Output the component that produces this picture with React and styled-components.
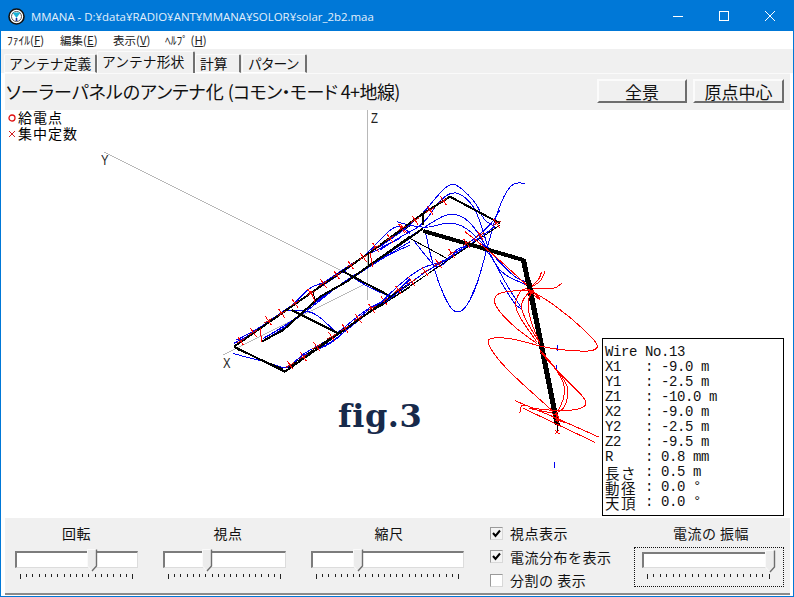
import React from "react";
import styled, { createGlobalStyle } from "styled-components";

const GlobalStyle = createGlobalStyle`
  html, body { margin: 0; padding: 0; background: #fff; }
  body { font-family: "Noto Sans CJK JP", "Liberation Sans", sans-serif; color: #000; }
`;

const Win = styled.div`
  width: 794px;
  height: 597px;
  box-sizing: border-box;
  border: 1px solid #0078d7;
  display: flex;
  flex-direction: column;
  overflow: hidden;
  background: #fff;
`;

const TitleBar = styled.div`
  height: 30px;
  flex: none;
  background: #0078d7;
  display: flex;
  align-items: center;
  padding-left: 7px;
  color: #e4f0fb;
  font-family: "Open Sans", sans-serif;
  font-size: 11.45px;
`;

const TitleText = styled.span`
  margin-left: 6px;
  flex: 1;
  white-space: nowrap;
`;

const WinBtn = styled.div`
  width: 46px;
  height: 30px;
  display: flex;
  align-items: center;
  justify-content: center;
`;

const MenuBar = styled.div`
  height: 18px;
  flex: none;
  display: flex;
  align-items: center;
  padding-left: 6px;
  font-size: 11.5px;
  color: #222;
  background: #fff;
`;

const MenuItem = styled.span`
  width: ${(p) => p.$w}px;
  white-space: pre;
  u { text-underline-offset: 1px; }
`;

const TabRow = styled.div`
  height: 24px;
  flex: none;
  background: #f0f0f0;
  display: flex;
  align-items: flex-end;
  padding-left: 3px;
`;

const Tab = styled.div`
  height: ${(p) => (p.$active ? 22 : 19)}px;
  width: ${(p) => p.$w}px;
  margin-right: ${(p) => p.$gap || 0}px;
  box-sizing: border-box;
  border: 1px solid #fbfbfb;
  border-right: 2px solid #707070;
  border-top-left-radius: 2px;
  border-top-right-radius: 2px;
  font-size: 13.8px;
  letter-spacing: ${(p) => p.$track || 0}px;
  line-height: ${(p) => (p.$active ? 19 : 17)}px;
  padding-left: ${(p) => p.$pad || 4}px;
  white-space: nowrap;
  overflow: hidden;
  background: #f0f0f0;
  border-bottom: ${(p) => (p.$active ? "none" : "1px solid #fff")};
  color: #111;
`;

const Panel = styled.div`
  flex: 1;
  margin: 0 3px 1px 4px;
  display: flex;
  flex-direction: column;
  background: #f0f0f0;
  border-top: 1px solid #fafafa;
  border-bottom: 2px solid #8a8a8a;
  min-height: 0;
`;

const Header = styled.div`
  height: 36px;
  flex: none;
  box-sizing: border-box;
  display: flex;
  align-items: center;
  padding: 0 6px 2px 1px;
  gap: 6px;
`;

const Heading = styled.div`
  flex: 1;
  font-size: 18px;
  white-space: pre;
  color: #111;
  font-feature-settings: "palt";
`;

const HeadingTail = styled.span`
  letter-spacing: -0.6px;
`;

const HeadButton = styled.div`
  width: ${(p) => p.$w}px;
  height: 24px;
  box-sizing: border-box;
  border-top: 2px solid #fbfbfb;
  border-left: 2px solid #fbfbfb;
  border-right: 2px solid #6d6d6d;
  border-bottom: 2px solid #6d6d6d;
  display: flex;
  align-items: center;
  justify-content: center;
  font-size: 17px;
  line-height: 1;
  color: #111;
`;

const Canvas = styled.div`
  position: relative;
  height: 408px;
  flex: none;
  background: #fff;
  overflow: hidden;
`;

const Plot = styled.svg`
  position: absolute;
  left: 0;
  top: 0;
  width: 785px;
  height: 408px;
  shape-rendering: crispEdges;
`;

const LegendRow = styled.div`
  position: absolute;
  left: 3px;
  top: ${(p) => p.$y}px;
  display: flex;
  align-items: center;
  gap: 2px;
  font-size: 14px;
  line-height: 15px;
  letter-spacing: 1px;
`;

const AxisLabel = styled.span`
  position: absolute;
  left: ${(p) => p.$x}px;
  top: ${(p) => p.$y}px;
  font-family: "Liberation Sans", sans-serif;
  font-size: 14.5px;
  line-height: 14px;
  color: #222;
  transform: scaleX(0.78);
  transform-origin: left top;
`;

const FigLabel = styled.div`
  position: absolute;
  left: 333px;
  top: 284px;
  font-family: "DejaVu Serif", "Liberation Serif", serif;
  font-weight: 700;
  font-size: 32px;
  line-height: 44px;
  color: #172a4b;
  letter-spacing: 0.5px;
`;

const InfoBox = styled.div`
  position: absolute;
  left: 597px;
  top: 228px;
  width: 182px;
  height: 178px;
  box-sizing: border-box;
  border: 1px solid #000;
  background: #fff;
  padding: 6px 0 0 2px;
`;

const InfoRow = styled.div`
  font-family: "Liberation Mono", monospace;
  font-size: 14px;
  letter-spacing: -0.4px;
  line-height: 15px;
  height: 15px;
  white-space: pre;
  color: #111;
`;

const Kanji = styled.span`
  display: inline-block;
  height: 15px;
  vertical-align: top;
  font-family: "Noto Sans CJK JP", sans-serif;
  font-size: 14.5px;
  line-height: 15px;
  letter-spacing: 1.5px;
`;

const Controls = styled.div`
  flex: 1;
  display: flex;
  padding-left: 10px;
  min-height: 0;
`;

const SliderGroup = styled.div`
  width: ${(p) => p.$w}px;
  margin-right: ${(p) => p.$gap || 0}px;
  padding-top: 5px;
`;

const SliderLabel = styled.div`
  text-align: center;
  font-size: 14px;
  line-height: 20px;
  height: 20px;
  padding-left: ${(p) => p.$shift || 0}px;
  white-space: pre;
  letter-spacing: 0.5px;
  color: #111;
`;

const Track = styled.div`
  position: relative;
  height: ${(p) => p.$h || 17}px;
  margin-top: ${(p) => p.$top ?? 8}px;
  box-sizing: border-box;
  background: #fff;
  border-top: 2px solid #7c7c7c;
  border-left: 2px solid #7c7c7c;
  border-right: 1px solid #dcdcdc;
  border-bottom: 1px solid #dcdcdc;
`;

const Thumb = styled.svg`
  position: absolute;
  left: ${(p) => p.$x}px;
  top: -4px;
`;

const Ticks = styled.div`
  display: flex;
  justify-content: space-between;
  align-items: flex-start;
  height: 5px;
  margin: 6px 5px 0;
`;

const Tick = styled.i`
  display: block;
  width: 1px;
  height: ${(p) => (p.$end ? 5 : 3)}px;
  background: #222;
`;

const CheckColumn = styled.div`
  width: 144px;
  padding-top: 5px;
  display: flex;
  flex-direction: column;
  gap: 3.5px;
`;

const CheckRow = styled.div`
  display: flex;
  align-items: center;
  height: 20px;
  font-size: 14px;
  letter-spacing: 0.5px;
  color: #111;
  white-space: pre;
`;

const CheckBox = styled.span`
  width: 13px;
  height: 13px;
  box-sizing: border-box;
  border: 1px solid #9a9a9a;
  border-right-color: #d8d8d8;
  border-bottom-color: #d8d8d8;
  background: ${(p) => (p.$on ? "#f4f4f4" : "#fff")};
  margin-right: 7px;
  display: flex;
  align-items: center;
  justify-content: center;
`;

const FocusBox = styled.div`
  width: 150px;
  height: 40px;
  margin-top: 4px;
  box-sizing: border-box;
  border: 1px dotted #111;
  padding: 4px 8px 0 7px;
`;

const FocusGroup = styled.div`
  padding-top: 5px;
`;

function TickRow({ count }) {
  return (
    <Ticks>
      {Array.from({ length: count }).map((_, i) => (
        <Tick key={i} $end={i === 0 || i === count - 1} />
      ))}
    </Ticks>
  );
}

function ThumbIcon({ x }) {
  return (
    <Thumb $x={x} width="11" height="24" viewBox="0 0 11 24">
      <path d="M0.5 0.5H9.5V17L5 22L0.5 17Z" fill="#ececec" stroke="#fafafa" />
      <path d="M9.5 0.5V17L5 22" fill="none" stroke="#6e6e6e" strokeWidth="1.4" />
    </Thumb>
  );
}

function Slider({ label, w, gap, x, ticks = 19, shift }) {
  return (
    <SliderGroup $w={w} $gap={gap}>
      <SliderLabel $shift={shift}>{label}</SliderLabel>
      <Track>
        <ThumbIcon x={x} />
      </Track>
      <TickRow count={ticks} />
    </SliderGroup>
  );
}

function Check({ on, children }) {
  return (
    <CheckRow>
      <CheckBox $on={on}>
        {on && (
          <svg width="9" height="9" viewBox="0 0 9 9">
            <path d="M1 4L3.5 7L8 1.5" fill="none" stroke="#000" strokeWidth="2" />
          </svg>
        )}
      </CheckBox>
      {children}
    </CheckRow>
  );
}

const AppIcon = () => (
  <svg width="17" height="17" viewBox="0 0 17 17">
    <circle cx="8.5" cy="8.5" r="7.5" fill="#fff" stroke="#111" strokeWidth="1.6" />
    <circle cx="8.5" cy="8.5" r="5" fill="none" stroke="#555" strokeWidth="1" />
    <path d="M4.5 4.5H12.5L8.5 10Z" fill="#19b4d8" />
    <path d="M8.5 10V13" stroke="#1030a0" strokeWidth="1.6" />
  </svg>
);

const FeedMark = () => (
  <svg width="8" height="8" viewBox="0 0 8 8">
    <circle cx="4" cy="4" r="3" fill="none" stroke="#e01010" strokeWidth="1.3" />
  </svg>
);

const LoadMark = () => (
  <svg width="8" height="8" viewBox="0 0 8 8">
    <path d="M1 1L7 7M7 1L1 7" stroke="#d02020" strokeWidth="1" />
  </svg>
);

// polylines are noted in crop coordinates (3x), each set with its own origin
const wireSets = [
  {
    origin: [220, 170],
    black: [
      ["42,530 195,605 570,340", 2],
      ["42,530 300,350 570,165", 2],
      ["50,538 190,597", 1],
      ["125,515 190,480 300,380 380,335 570,200", 2],
      ["215,420 350,488", 2],
      ["370,305 510,378", 2],
      ["445,290 445,250", 1],
      ["285,395 280,365", 1],
      ["205,592 350,490 570,352", 1],
    ],
    blue: [
      "38,550 90,565 140,575 190,595 210,590 250,550 300,525 345,495 400,450 450,410 510,385 570,325",
      "42,520 100,490 150,450 215,410 270,350 310,340 380,290 440,255 540,205",
      "50,510 120,475 200,415 290,360 340,325 430,265 530,155 570,190",
      "130,512 200,470 290,400 370,335 470,275 570,205",
      "130,505 210,460 300,385 380,335 480,270 570,215",
      "140,500 220,455 310,375 390,330 490,262 570,225",
      "200,420 260,420 300,440 350,490",
      "370,300 420,340 510,380",
      "210,590 240,555 320,530 370,490 440,420 500,390 570,330",
      "220,580 260,555 330,520 380,480 450,425 510,378 570,340",
    ],
    red: ["120,475 125,515", "272,362 285,395", "450,250 458,290"],
    crosses: [
      [62, 513], [100, 487], [145, 452], [185, 430], [225, 400], [272, 370], [310, 340], [350, 315],
      [392, 285], [430, 262], [467, 232], [510, 205], [550, 175], [210, 585], [250, 560], [290, 530],
      [335, 500], [375, 475], [415, 445], [455, 415], [492, 392], [535, 360],
    ],
  },
  {
    origin: [380, 170],
    black: [
      ["130,130 210,80 360,160", 2],
      ["0,225 130,130 130,165", 2],
      ["0,265 130,175", 2],
      ["360,165 190,280 0,410", 1],
      ["90,205 200,265", 1],
      ["130,183 430,270", 4],
      ["430,268 475,480", 5],
    ],
    blue: [
      "0,230 60,190 130,130 165,85 210,38 240,50 290,100 310,150 345,170",
      "0,240 60,200 130,165 175,95 215,65 250,75 290,120 325,235",
      "50,155 130,180 200,155 260,170 320,235 400,320 435,335",
      "90,200 135,170 210,125 270,150 325,240 360,310 440,345",
      "100,210 150,275 175,295 205,270 240,225 325,235 370,330 425,415",
      "0,400 60,340 130,290 175,280 210,262 330,170 360,120",
      "0,410 100,330 170,285 210,265 345,170",
      "435,42 410,33 380,60 350,130 320,240 290,350 260,410 235,430 210,415 175,340 150,250 135,180",
    ],
    red: [
      "255,185 320,235 440,345",
      "445,355 480,340 495,305",
      "445,355 475,335 485,305",
      "450,355 520,360 545,340",
      "450,355 480,385",
    ],
    crosses: [
      [30, 205], [65, 175], [105, 150], [150, 120], [190, 92], [55, 360], [95, 335], [135, 305],
      [175, 280], [215, 250], [260, 220], [300, 195], [350, 160],
    ],
  },
  {
    origin: [470, 280],
    black: [
      ["175,0 262,435", 5],
      ["262,435 262,460", 1],
    ],
    blue: ["262,196 262,214", "258,255 260,272", "255,546 255,564", "90,0 130,70 155,88", "25,0 0,58"],
    red: [
      "180,30 100,33 72,50 75,80 130,140 200,190",
      "175,30 210,45 300,110 385,190 380,210 340,215 230,205 130,175 60,172 50,190 100,260 250,395",
      "210,215 250,260 300,310 350,360 345,385 270,395 150,380 250,400",
      "135,362 250,410 388,472",
      "150,398 150,375 170,378",
      "160,385 375,487",
      "180,30 160,20 135,60 140,100 200,185",
      "185,30 150,60 160,110 210,190",
      "190,30 170,55 180,120 210,190",
      "210,210 290,300 295,350 280,390 255,400",
      "215,215 280,290 285,350 265,390",
      "180,35 210,60",
      "245,400 275,410 250,425 270,415 255,395 265,430",
      "240,405 270,425 292,428",
      "255,450 268,462",
      "268,450 255,462",
    ],
    crosses: [],
  },
];

// rounds the corners of a noted polyline so the current lobes read as curves
function smoothPath(points) {
  const p = points.split(" ").map((s) => s.split(",").map(Number));
  if (p.length < 3) return `M${p[0]}L${p[p.length - 1]}`;
  let d = `M${p[0]}`;
  for (let i = 1; i < p.length - 1; i++) {
    const mx = (p[i][0] + p[i + 1][0]) / 2;
    const my = (p[i][1] + p[i + 1][1]) / 2;
    d += `Q${p[i]} ${mx},${my}`;
  }
  return d + `L${p[p.length - 1]}`;
}

const wire = (points, color, width, key, curved) => (
  <path
    key={key}
    d={curved ? smoothPath(points) : "M" + points.replace(/ /g, "L")}
    fill="none"
    stroke={color}
    strokeWidth={width}
    vectorEffect="non-scaling-stroke"
    strokeLinejoin="round"
  />
);

function AntennaPlot() {
  return (
    <Plot viewBox="5 110 785 408">
      <g stroke="#b8b8b8" strokeWidth="1">
        <line x1="367.5" y1="110" x2="367.5" y2="300" />
        <line x1="104" y1="152" x2="342" y2="271" />
        <line x1="223" y1="355" x2="367" y2="283" />
      </g>
      {wireSets.map((set) => (
        <g key={set.origin[0]} transform={`translate(${set.origin[0]} ${set.origin[1]}) scale(0.3333)`}>
          {set.blue.map((pts, i) => wire(pts, "#0000f0", 1, "b" + i, true))}
          {set.black.map(([pts, w], i) => wire(pts, "#000", w, "k" + i))}
          {set.red.map((pts, i) => wire(pts, "#ff0000", 1, "r" + i, true))}
          {set.crosses.map(([x, y], i) => (
            <g key={"x" + i} transform={`translate(${x} ${y})`}>
              {wire("-9,-13 9,13", "#ff0000", 1, "a")}
              {wire("-12,7 12,-7", "#c01010", 1, "c")}
            </g>
          ))}
        </g>
      ))}
    </Plot>
  );
}

export default function App() {
  return (
    <Win>
      <GlobalStyle />
      <TitleBar>
        <AppIcon />
        <TitleText>MMANA - D:¥data¥RADIO¥ANT¥MMANA¥SOLOR¥solar_2b2.maa</TitleText>
        <WinBtn>
          <svg width="10" height="10" viewBox="0 0 10 10"><path d="M0 5.5H10" stroke="#fff" /></svg>
        </WinBtn>
        <WinBtn>
          <svg width="10" height="10" viewBox="0 0 10 10"><rect x="0.5" y="0.5" width="9" height="9" fill="none" stroke="#fff" /></svg>
        </WinBtn>
        <WinBtn>
          <svg width="10" height="10" viewBox="0 0 10 10"><path d="M0 0L10 10M10 0L0 10" stroke="#fff" /></svg>
        </WinBtn>
      </TitleBar>
      <MenuBar>
        <MenuItem $w={53}>ﾌｧｲﾙ(<u>F</u>)</MenuItem>
        <MenuItem $w={53}>編集(<u>E</u>)</MenuItem>
        <MenuItem $w={52}>表示(<u>V</u>)</MenuItem>
        <MenuItem $w={50}>ﾍﾙﾌﾟ (<u>H</u>)</MenuItem>
      </MenuBar>
      <TabRow>
        <Tab $w={93}>アンテナ定義</Tab>
        <Tab $w={98} $active>アンテナ形状</Tab>
        <Tab $w={46} $gap={1}>計算</Tab>
        <Tab $w={65} $pad={5} $track={-1}>パターン</Tab>
      </TabRow>
      <Panel>
        <Header>
          <Heading>ソーラーパネルのアンテナ化 <HeadingTail>(コモン・モード 4+地線)</HeadingTail></Heading>
          <HeadButton $w={90}>全景</HeadButton>
          <HeadButton $w={91}>原点中心</HeadButton>
        </Header>
        <Canvas>
          <AntennaPlot />
          <LegendRow $y={0}><FeedMark />給電点</LegendRow>
          <LegendRow $y={16}><LoadMark />集中定数</LegendRow>
          <AxisLabel $x={366} $y={1}>Z</AxisLabel>
          <AxisLabel $x={96} $y={43}>Y</AxisLabel>
          <AxisLabel $x={218} $y={246}>X</AxisLabel>
          <FigLabel>fig.3</FigLabel>
          <InfoBox>
            <InfoRow>Wire No.13</InfoRow>
            <InfoRow>X1   : -9.0 m</InfoRow>
            <InfoRow>Y1   : -2.5 m</InfoRow>
            <InfoRow>Z1   : -10.0 m</InfoRow>
            <InfoRow>X2   : -9.0 m</InfoRow>
            <InfoRow>Y2   : -2.5 m</InfoRow>
            <InfoRow>Z2   : -9.5 m</InfoRow>
            <InfoRow>R    : 0.8 mm</InfoRow>
            <InfoRow><Kanji>長さ</Kanji> : 0.5 m</InfoRow>
            <InfoRow><Kanji>動径</Kanji> : 0.0 °</InfoRow>
            <InfoRow><Kanji>天頂</Kanji> : 0.0 °</InfoRow>
          </InfoBox>
        </Canvas>
        <Controls>
          <Slider label="回転" w={123} gap={25} x={70} />
          <Slider label="視点" w={123} gap={25} x={37} shift={7} />
          <Slider label="縮尺" w={153} gap={26} x={40} ticks={24} shift={3} />
          <CheckColumn>
            <Check on>視点表示</Check>
            <Check on>電流分布を表示</Check>
            <Check>分割の 表示</Check>
          </CheckColumn>
          <FocusGroup>
            <SliderLabel $shift={4}>電流の 振幅</SliderLabel>
            <FocusBox>
              <Track $h={16} $top={0}>
                <ThumbIcon x={121} />
              </Track>
              <TickRow count={20} />
            </FocusBox>
          </FocusGroup>
        </Controls>
      </Panel>
    </Win>
  );
}
